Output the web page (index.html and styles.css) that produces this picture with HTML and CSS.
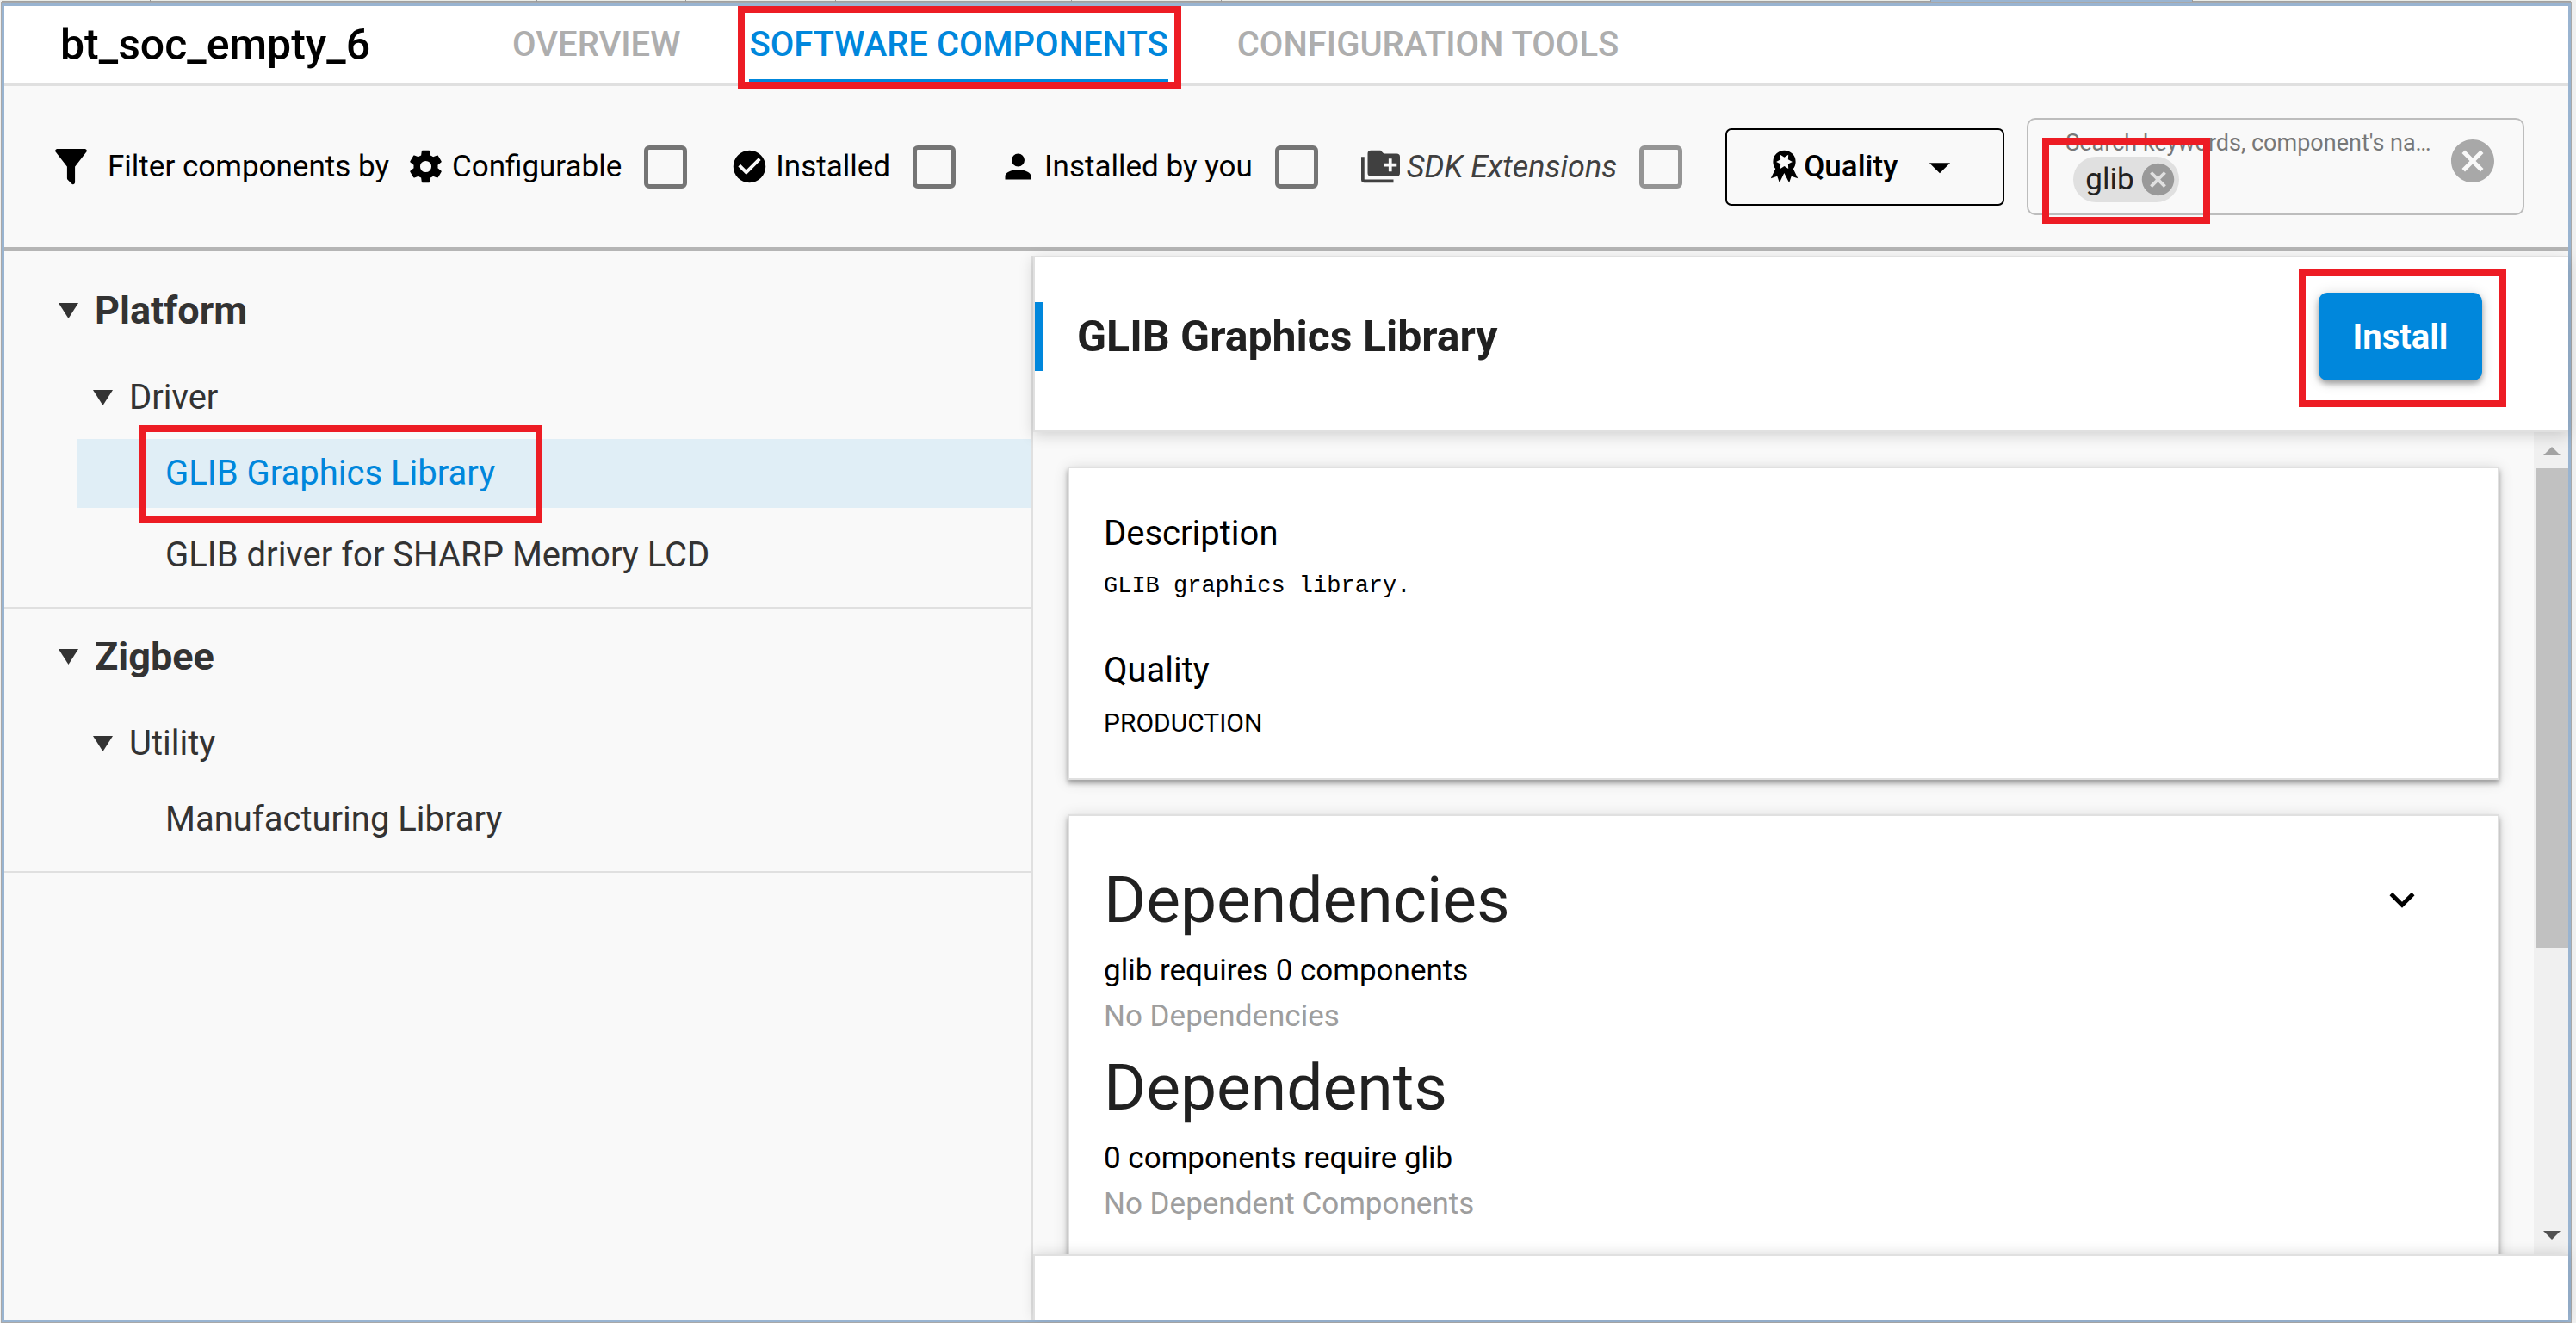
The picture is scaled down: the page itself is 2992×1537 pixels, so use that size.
FILE: index.html
```html
<!DOCTYPE html>
<html lang="en">
<head>
<meta charset="utf-8">
<title>bt_soc_empty_6 - Software Components</title>
<link rel="stylesheet" href="styles.css">
</head>
<body>
<div class="window">
  <div class="editor-tabs">
    <span class="editor-tab"></span><span class="editor-tab"></span><span class="editor-tab wide"></span>
    <span class="editor-tab"></span><span class="editor-tab"></span><span class="editor-tab wide"></span>
    <span class="editor-tab"></span><span class="editor-tab wide"></span><span class="editor-tab wide"></span>
    <span class="editor-tab wide"></span><span class="editor-tab active"></span><span class="editor-rest"></span>
  </div>
  <div class="shell">
    <header class="header">
      <h1 class="project">bt_soc_empty_6</h1>
      <nav class="tabs">
        <a class="tab" href="#overview">OVERVIEW</a>
        <a class="tab selected" href="#components">SOFTWARE COMPONENTS<span class="mark mark-tab"></span></a>
        <a class="tab" href="#tools">CONFIGURATION TOOLS</a>
      </nav>
    </header>

    <div class="toolbar">
      <svg class="icon-filter" viewBox="0 0 24 24"><path d="M14,12V19.88C14.04,20.18 13.94,20.5 13.71,20.71C13.32,21.1 12.69,21.1 12.3,20.71L10.29,18.7C10.06,18.47 9.96,18.16 10,17.87V12H9.97L4.21,4.62C3.87,4.19 3.95,3.56 4.38,3.22C4.57,3.08 4.78,3 5,3H19C19.22,3 19.43,3.08 19.62,3.22C20.05,3.56 20.13,4.19 19.79,4.62L14.03,12H14Z"/></svg>
      <span class="filter-title">Filter components by</span>
      <label class="filter">
        <svg class="icon" viewBox="0 0 24 24"><path d="M12,15.5A3.5,3.5 0 0,1 8.5,12A3.5,3.5 0 0,1 12,8.5A3.5,3.5 0 0,1 15.5,12A3.5,3.5 0 0,1 12,15.5M19.43,12.97C19.47,12.65 19.5,12.33 19.5,12C19.5,11.67 19.47,11.34 19.43,11L21.54,9.37C21.73,9.22 21.78,8.95 21.66,8.73L19.66,5.27C19.54,5.05 19.27,4.96 19.05,5.05L16.56,6.05C16.04,5.66 15.5,5.32 14.87,5.07L14.5,2.42C14.46,2.18 14.25,2 14,2H10C9.75,2 9.54,2.18 9.5,2.42L9.13,5.07C8.5,5.32 7.96,5.66 7.44,6.05L4.95,5.05C4.73,4.96 4.46,5.05 4.34,5.27L2.34,8.73C2.21,8.95 2.27,9.22 2.46,9.37L4.57,11C4.53,11.34 4.5,11.67 4.5,12C4.5,12.33 4.53,12.65 4.57,12.97L2.46,14.63C2.27,14.78 2.21,15.05 2.34,15.27L4.34,18.73C4.46,18.95 4.73,19.03 4.95,18.95L7.44,17.94C7.96,18.34 8.5,18.68 9.13,18.93L9.5,21.58C9.54,21.82 9.75,22 10,22H14C14.25,22 14.46,21.82 14.5,21.58L14.87,18.93C15.5,18.67 16.04,18.34 16.56,17.94L19.05,18.95C19.27,19.03 19.54,18.95 19.66,18.73L21.66,15.27C21.78,15.05 21.73,14.78 21.54,14.63L19.43,12.97Z"/></svg>
        <span class="filter-name">Configurable</span>
        <input class="check" type="checkbox">
      </label>
      <label class="filter">
        <svg class="icon" viewBox="0 0 24 24"><path d="M12 2C6.5 2 2 6.5 2 12S6.5 22 12 22 22 17.5 22 12 17.5 2 12 2M10 17L5 12L6.41 10.59L10 14.17L17.59 6.58L19 8L10 17Z"/></svg>
        <span class="filter-name">Installed</span>
        <input class="check" type="checkbox">
      </label>
      <label class="filter">
        <svg class="icon" viewBox="0 0 24 24"><path d="M12,4A4,4 0 0,1 16,8A4,4 0 0,1 12,12A4,4 0 0,1 8,8A4,4 0 0,1 12,4M12,14C16.42,14 20,15.79 20,18V20H4V18C4,15.79 7.58,14 12,14Z"/></svg>
        <span class="filter-name">Installed by you</span>
        <input class="check" type="checkbox">
      </label>
      <label class="filter muted">
        <svg class="icon" viewBox="0 0 24 24"><path fill-rule="evenodd" d="M22,4H14L12,2H6A2,2 0 0,0 4,4V16A2,2 0 0,0 6,18H22A2,2 0 0,0 24,16V6A2,2 0 0,0 22,4M17,7H19V10H22V12H19V15H17V12H14V10H17V7M2,6H0V20A2,2 0 0,0 2,22H20V20H2V6Z"/></svg>
        <span class="filter-name">SDK Extensions</span>
        <input class="check" type="checkbox">
      </label>
      <button class="quality" type="button">
        <svg class="icon" viewBox="0 0 24 24"><path fill-rule="evenodd" d="M20.39,19.37L16.38,18L15,22L11.92,16L9,22L7.62,18L3.62,19.37L6.53,13.37C5.57,12.17 5,10.65 5,9A7,7 0 0,1 12,2A7,7 0 0,1 19,9C19,10.65 18.43,12.16 17.47,13.37L20.39,19.37M7,9L9.69,10.34L9.5,13.34L12,11.68L14.5,13.33L14.33,10.34L17,9L14.32,7.65L14.5,4.67L12,6.31L9.5,4.65L9.67,7.66L7,9Z"/></svg>
        <span>Quality</span>
        <svg class="icon-menu" viewBox="0 0 24 24"><path d="M7,10L12,15L17,10H7Z"/></svg>
      </button>
      <div class="search">
        <div class="search-main">
          <label class="search-label" for="search">Search keywords, component's na…</label>
          <div class="search-line">
            <span class="chip">glib
              <button class="chip-close" type="button" aria-label="Remove glib"><svg class="icon" viewBox="0 0 24 24"><path d="M12,2C17.53,2 22,6.47 22,12C22,17.53 17.53,22 12,22C6.47,22 2,17.53 2,12C2,6.47 6.47,2 12,2M15.59,7L12,10.59L8.41,7L7,8.41L10.59,12L7,15.59L8.41,17L12,13.41L15.59,17L17,15.59L13.41,12L17,8.41L15.59,7Z"/></svg></button>
            </span>
            <input class="search-input" id="search" type="text">
          </div>
        </div>
        <button class="clear" type="button" aria-label="Clear search"><svg class="icon-clear" viewBox="0 0 24 24"><path d="M12,2C17.53,2 22,6.47 22,12C22,17.53 17.53,22 12,22C6.47,22 2,17.53 2,12C2,6.47 6.47,2 12,2M15.59,7L12,10.59L8.41,7L7,8.41L10.59,12L7,15.59L8.41,17L12,13.41L15.59,17L17,15.59L13.41,12L17,8.41L15.59,7Z"/></svg></button>
        <span class="mark mark-search"></span>
      </div>
    </div>

    <div class="body">
      <aside class="tree">
        <section class="group">
          <h2 class="group-title"><svg class="caret" viewBox="0 0 23 18"><path d="M0,0H23L11.5,18Z"/></svg>Platform</h2>
          <h3 class="branch"><svg class="caret" viewBox="0 0 23 18"><path d="M0,0H23L11.5,18Z"/></svg>Driver</h3>
          <ul class="leaves">
            <li><a class="leaf current" href="#glib"><span class="leaf-name">GLIB Graphics Library<span class="mark mark-leaf"></span></span></a></li>
            <li><a class="leaf" href="#glib-driver">GLIB driver for SHARP Memory LCD</a></li>
          </ul>
        </section>
        <section class="group">
          <h2 class="group-title"><svg class="caret" viewBox="0 0 23 18"><path d="M0,0H23L11.5,18Z"/></svg>Zigbee</h2>
          <h3 class="branch"><svg class="caret" viewBox="0 0 23 18"><path d="M0,0H23L11.5,18Z"/></svg>Utility</h3>
          <ul class="leaves">
            <li><a class="leaf" href="#manufacturing">Manufacturing Library</a></li>
          </ul>
        </section>
      </aside>

      <main class="detail">
        <div class="detail-head">
          <h2 class="detail-title">GLIB Graphics Library</h2>
          <div class="install-wrap">
            <button class="install" type="button">Install</button>
            <span class="mark mark-install"></span>
          </div>
        </div>
        <div class="detail-body">
          <div class="cards">
            <section class="card">
              <h3 class="field">Description</h3>
              <pre class="value code">GLIB graphics library.</pre>
              <h3 class="field second">Quality</h3>
              <p class="value">PRODUCTION</p>
            </section>
            <section class="card deps">
              <div class="deps-head">
                <h3 class="deps-title">Dependencies</h3>
                <button class="expand" type="button" aria-label="Expand"><svg class="icon-menu" viewBox="0 0 24 24"><path d="M7.41,8.58L12,13.17L16.59,8.58L18,10L12,16L6,10L7.41,8.58Z"/></svg></button>
              </div>
              <p class="line">glib requires 0 components</p>
              <p class="line none">No Dependencies</p>
              <h3 class="deps-title">Dependents</h3>
              <p class="line">0 components require glib</p>
              <p class="line none">No Dependent Components</p>
            </section>
          </div>
          <div class="scrollbar">
            <svg class="arrow up" viewBox="0 0 20 10"><path d="M10,0L20,10H0Z"/></svg>
            <div class="track"><div class="thumb"></div></div>
            <svg class="arrow down" viewBox="0 0 20 10"><path d="M0,0H20L10,10Z"/></svg>
          </div>
        </div>
        <div class="detail-foot"></div>
      </main>
    </div>
  </div>
</div>
</body>
</html>
```
FILE: styles.css
```css
* { box-sizing: border-box; }

body {
  margin: 0;
  font-family: Roboto, "Liberation Sans", sans-serif;
  font-size: 35px;
  color: #000;
  background: #f0f0f0;
}

h1, h2, h3, p, pre, ul { margin: 0; padding: 0; }
ul { list-style: none; }
a { text-decoration: none; color: inherit; }
svg { display: block; flex: none; fill: currentColor; }
button { font-family: inherit; padding: 0; border: 0; background: none; color: inherit; }

.window {
  height: 100vh;
  padding: 0 6px 1px 2px;
  display: flex;
  flex-direction: column;
}

/* bottom edge of the editor's tab strip */
.editor-tabs {
  flex: none;
  height: 3px;
  display: flex;
  background: linear-gradient(#e9ece8 1px, #a0a0a0 1px, #a0a0a0 2px, #e9ece8 2px);
}
.editor-tab { flex: 172 0 0; border-right: 1px solid #999; }
.editor-tab.wide { flex-grow: 273; }
.editor-tab.active { flex-grow: 302; background: #99b4d1; }
.editor-rest { flex: 438 0 0; }

.shell {
  flex: 1;
  min-height: 0;
  display: flex;
  flex-direction: column;
  border: 3px solid #99b4d1;
  border-top-width: 4px;
  outline: 1px solid #a8a8a8;
  background: #f9f9f9;
}

.mark {
  position: absolute;
  border: 8px solid #ed1c24;
  pointer-events: none;
  z-index: 2;
}

/* header */
.header {
  flex: none;
  height: 93px;
  display: flex;
  align-items: stretch;
  gap: 165px;
  padding-left: 65px;
  background: #fff;
  border-bottom: 3px solid #e0e0e0;
}
.project { font-size: 50px; font-weight: 500; line-height: 90px; }
.tabs { display: flex; gap: 80px; }
.tab {
  position: relative;
  font-size: 40px;
  font-weight: 500;
  line-height: 90px;
  height: 90px;
  color: #aeaeae;
}
.tab.selected { color: #0087dc; box-shadow: inset 0 -5px #0087dc; }
.mark-tab { top: 0; bottom: -6px; left: -13px; right: -15px; }

/* toolbar */
.toolbar {
  flex: none;
  height: 192px;
  display: flex;
  align-items: center;
  padding: 0 51px 0 50px;
  border-bottom: 5px solid #b5b5b5;
  line-height: 48px;
  white-space: nowrap;
}
.icon { width: 45px; height: 45px; }
.icon-filter { width: 55px; height: 55px; }
.icon-menu { width: 58px; height: 58px; }
.icon-clear { width: 60px; height: 60px; }
.filter-title { margin: 0 20px 0 15px; }
.filter { display: flex; align-items: center; margin-right: 50px; }
.filter-name { margin: 0 26px 0 8px; }
.filter.muted { font-size: 36px; font-style: italic; color: #404040; }
.check {
  appearance: none;
  flex: none;
  width: 50px;
  height: 50px;
  margin: 0;
  border: 5px solid #757575;
  border-radius: 6px;
}
.muted .check { border-color: #959595; }

.quality {
  flex: none;
  width: 324px;
  height: 90px;
  margin-right: 26px;
  display: flex;
  align-items: center;
  padding-left: 44px;
  border: 2px solid #000;
  border-radius: 7px;
  font-size: 35px;
  font-weight: 500;
}
.quality .icon-menu { margin-left: 20px; }

.search {
  position: relative;
  flex: 1;
  min-width: 0;
  height: 113px;
  display: flex;
  padding: 12px 28px 0 43px;
  border: 2px solid #bdbdbd;
  border-radius: 10px;
}
.search-main { flex: 1; min-width: 0; }
.search-label { display: block; font-size: 27px; line-height: 30px; color: #777; }
.search-line { display: flex; padding: 1px 0 0 9px; }
.chip {
  display: flex;
  align-items: center;
  gap: 5px;
  height: 53px;
  padding: 0 2px 0 14px;
  border-radius: 27px;
  background: #e0e0e0;
  color: #212121;
}
.chip-close { color: #999; }
.search-input {
  flex: 1;
  min-width: 0;
  padding: 0 8px;
  border: 0;
  background: none;
  font: inherit;
  outline: none;
}
.clear { align-self: flex-start; margin-top: 6px; color: #a8a8a8; }
.mark-search { top: 21px; left: 16px; width: 195px; height: 100px; }

/* body */
.body {
  flex: 1;
  min-height: 0;
  display: grid;
  grid-template-columns: 1195fr 1783fr;
  grid-template-rows: minmax(0, 1fr);
  padding-top: 5px;
}

.tree { padding-top: 8px; border-right: 3px solid #e0e0e0; color: #333; }
.group { padding: 16px 0 20px; border-bottom: 2px solid #e0e0e0; }
.group-title, .branch { display: flex; align-items: center; gap: 19px; line-height: 80px; }
.group-title { padding-left: 63px; font-size: 45px; font-weight: 700; }
.branch { margin: 21px 0 8px; padding-left: 103px; font-size: 40px; font-weight: 400; }
.caret { width: 23px; height: 18px; }
.leaves { display: grid; gap: 15px; padding-left: 85px; }
.leaf { display: block; padding-left: 102px; font-size: 40px; line-height: 80px; }
.leaf.current { background: #e0eef6; color: #0087dc; }
.leaf-name { position: relative; display: inline-block; }
.mark-leaf { top: -16px; bottom: -18px; left: -31px; right: -55px; }

.detail { min-width: 0; display: flex; flex-direction: column; }
.detail-head {
  position: relative;
  z-index: 1;
  flex: none;
  height: 205px;
  display: flex;
  align-items: flex-start;
  justify-content: space-between;
  padding: 41px 100px 0 0;
  background: #fff;
  border: 2px solid #e0e0e0;
  border-right: 0;
  box-shadow: 0 4px 16px rgba(0, 0, 0, .16);
}
.detail-title {
  margin-top: 11px;
  padding-left: 39px;
  border-left: 10px solid #0087dc;
  font-size: 50px;
  font-weight: 700;
  line-height: 80px;
  color: #212121;
}
.install-wrap { position: relative; }
.install {
  display: block;
  width: 190px;
  height: 102px;
  border-radius: 10px;
  background: #0087dc;
  color: #fff;
  font-size: 40px;
  font-weight: 700;
  box-shadow: 0 4px 6px rgba(0, 0, 0, .3), 0 2px 16px rgba(0, 0, 0, .16);
}
.mark-install { top: -27px; bottom: -31px; left: -23px; right: -28px; }

.detail-body { flex: 1; min-height: 0; display: flex; overflow: hidden; }
.cards { flex: 1; min-width: 0; display: grid; align-content: start; gap: 40px; padding: 40px 40px 0; }
.card {
  padding: 46px 40px 44px;
  background: #fff;
  border: 2px solid #e0e0e0;
  box-shadow: 0 4px 5px rgba(0, 0, 0, .3), 0 2px 16px rgba(0, 0, 0, .14);
}
.field { font-size: 40px; font-weight: 400; line-height: 60px; }
.field.second { margin-top: 48px; }
.value { margin-top: 11px; font-size: 30px; line-height: 40px; }
.code { font-family: "Liberation Mono", monospace; font-size: 27px; }
.deps { min-height: 600px; padding-top: 41px; }
.deps-head { display: flex; align-items: center; justify-content: space-between; padding-right: 42px; }
.deps-title { font-size: 75px; font-weight: 400; line-height: 112px; color: #212121; }
.line { line-height: 53px; font-size: 35px; }
.none { color: #9e9e9e; }

.scrollbar {
  flex: none;
  width: 40px;
  display: flex;
  flex-direction: column;
  padding: 17px 0;
  background: #f0f0f0;
}
.arrow { width: 20px; height: 10px; margin-left: 11px; }
.up { color: #a3a3a3; }
.down { color: #505050; }
.track { flex: 1; margin: 15px 0 15px 2px; }
.thumb { height: 64%; background: #c1c1c1; }

.detail-foot {
  position: relative;
  flex: none;
  height: 76px;
  background: #fff;
  border: solid #e0e0e0;
  border-width: 2px 0 0 2px;
  box-shadow: 0 -2px 14px rgba(0, 0, 0, .12);
}
```
